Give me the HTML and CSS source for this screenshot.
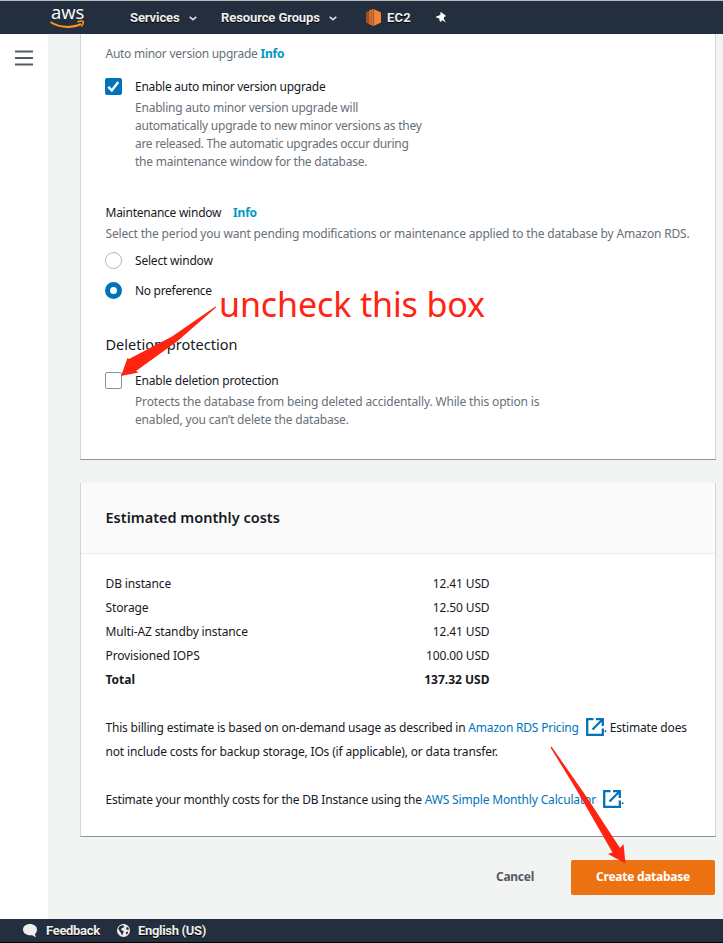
FILE: index.html
```html
<!DOCTYPE html>
<html lang="en">
<head>
<meta charset="utf-8">
<title>Create database</title>
<link rel="stylesheet" href="styles.css">
</head>
<body>
<header class="topbar">
  <div class="logo"><span class="logo-text">aws</span>
    <svg class="smile" width="36" height="10" viewBox="0 0 36 10"><path d="M.5 2C9 8 23 8.200 31 4" fill="none" stroke="#f7981f" stroke-width="2"/><path d="M27.500 2C30 .8 33 .8 33.300 1.500S32.600 5 31.300 6.500" fill="none" stroke="#f7981f" stroke-width="1.600"/></svg>
  </div>
  <nav class="nav">
    <a class="nav-services">Services</a>
    <svg class="chev" width="8" height="5" viewBox="0 0 8 5"><path d="M.7 .8L4 3.600 7.300 .8" fill="none" stroke="#ddd" stroke-width="1.600"/></svg>
    <a class="nav-groups">Resource Groups</a>
    <svg class="chev" width="8" height="5" viewBox="0 0 8 5"><path d="M.7 .8L4 3.600 7.300 .8" fill="none" stroke="#ddd" stroke-width="1.600"/></svg>
    <svg class="cube" width="15" height="17" viewBox="0 0 15 17"><path d="M0 3L3 2V15L0 13.500Z" fill="#9d5025"/><path d="M3 1.500L7.500 0V17L3 15.200Z" fill="#d97730"/><path d="M7.500 0L15 3.500V13.500L7.500 17Z" fill="#f58534"/><path d="M2.800 2v13M5.200 2v13.500M7.600 1v15" stroke="#9d5025" stroke-width=".8"/></svg>
    <a class="nav-ec2">EC2</a>
    <svg class="pin" width="11" height="11" viewBox="0 0 11 11"><path d="M4.800 0L9.700 3.400 9.300 4.800 8 5 7.900 7 10 10.500 6 8 5.200 9.700 3.800 9.400 3.200 6.600 .2 5.600 0 4.400 2.200 4 4.600 2.400 4.200 1Z" fill="#fff"/></svg>
  </nav>
</header>
<main class="layout">
  <aside class="rail">
    <svg width="18" height="16" viewBox="0 0 18 16"><path d="M0 1.500h18M0 8h18M0 14.500h18" stroke="#545b64" stroke-width="2.200"/></svg>
  </aside>
  <section class="content">
    <div class="card maintenance">
      <p class="muted first">Auto minor version upgrade <a class="info">Info</a></p>
      <div class="option">
        <svg width="17" height="17" viewBox="0 0 17 17"><rect width="17" height="17" rx="2" fill="#0073bb"/><path d="M3.300 8.800L6.800 12.400 13.300 4" fill="none" stroke="#fff" stroke-width="2.400"/></svg>
        <div><p class="label upgrade">Enable auto minor version upgrade</p>
        <p class="muted help">Enabling auto minor version upgrade will<br>automatically upgrade to new minor versions as they<br><span class="tight">are released. The automatic upgrades occur during</span><br>the maintenance window for the database.</p></div>
      </div>
      <p class="window-title">Maintenance window <a class="info gap">Info</a></p>
      <p class="muted period">Select the period you want pending modifications or maintenance applied to the database by Amazon RDS.</p>
      <div class="option select"><span class="radio"></span><p class="label">Select window</p></div>
      <div class="option pref"><span class="radio on"></span><p class="label tight">No preference</p></div>
      <h2 class="subhead">Deletion protection</h2>
      <div class="option del"><span class="check"></span>
        <div><p class="label">Enable deletion protection</p>
        <p class="muted help loose">Protects the database from being deleted accidentally. While this option is<br>enabled, you can’t delete the database.</p></div>
      </div>
    </div>
    <div class="card costs">
      <h2 class="card-head">Estimated monthly costs</h2>
      <div class="card-body">
        <div class="row"><span>DB instance</span><span>12.41 USD</span></div>
        <div class="row"><span>Storage</span><span>12.50 USD</span></div>
        <div class="row"><span>Multi-AZ standby instance</span><span>12.41 USD</span></div>
        <div class="row"><span>Provisioned IOPS</span><span>100.00 USD</span></div>
        <div class="row total"><span>Total</span><span>137.32 USD</span></div>
        <p class="note">This billing estimate is based on on-demand usage as described in <a class="link">Amazon RDS Pricing</a><svg class="ext" width="18" height="18" viewBox="0 0 18 18"><path d="M7.500 1.200H1.200V16.800H16.800V10.500M10 1.200H16.800V8M16.200 1.800L6.500 11.500" fill="none" stroke="#0073bb" stroke-width="2.300"/></svg><span class="loose">. Estimate does</span><br><span class="loose">not include costs for backup storage, IOs (if applicable), or data transfer.</span></p>
        <p class="note">Estimate your monthly costs for the DB Instance using the <a class="link loose">AWS Simple Monthly Calculator</a><svg class="ext" width="18" height="18" viewBox="0 0 18 18"><path d="M7.500 1.200H1.200V16.800H16.800V10.500M10 1.200H16.800V8M16.200 1.800L6.500 11.500" fill="none" stroke="#0073bb" stroke-width="2.300"/></svg>.</p>
      </div>
    </div>
    <div class="actions"><button class="cancel">Cancel</button><button class="create">Create database</button></div>
  </section>
</main>
<footer class="footer">
  <svg width="14" height="13" viewBox="0 0 14 13"><path d="M7 0C11 0 14 2.300 14 5.600 14 8 12.800 9.400 12 10c0 1 .4 2 1 3-1.700-.2-2.800-1-3.700-1.800C4 12 0 9.500 0 5.600 0 2.300 3 0 7 0Z" fill="#eee"/></svg>
  <a class="feedback">Feedback</a>
  <svg class="globe" width="13" height="13" viewBox="0 0 13 13"><circle cx="6.500" cy="6.500" r="6.500" fill="#eee"/><path d="M1.200 4.500L3 2 5.500 1.200 7.500 2.200 6 4 4.500 4.200 4.200 6 6.800 7.200 6.200 9 5 11.500 4 9 2.500 7ZM9 3.500L11 3.200 12 5.500 10.800 6 9.500 5.500ZM9 8L11.200 7.500 10.500 9.800 9 10.500Z" fill="#232f3e"/></svg>
  <a class="lang">English (US)</a>
</footer>
<div class="annotation">uncheck this box</div>
<svg class="arrows" width="723" height="943" viewBox="0 0 723 943"><path d="M215.500 306.500L172 336.500 129 359 127.500 358 121 376 138.500 372.500 136 371 177 341.500 216 307.500Z" fill="#ff2412"/><path d="M551.500 746.500L550.500 747.500 576 789 612.500 852.500 608 854 625.500 863.500 623.500 844 620 848 586 796Z" fill="#ff2412"/></svg>
</body>
</html>
```
FILE: styles.css
```css
* { box-sizing: border-box; }
body { margin: 0; width: 723px; height: 943px; overflow: hidden; position: relative; background: #f2f3f3; font: 12px/18px "Noto Sans", sans-serif; color: #16191f; white-space: nowrap; display: flex; flex-direction: column; }
p, h2 { margin: 0; }
svg { flex: none; }
.topbar { height: 34px; flex: none; background: #232f3e; border-top: 1px solid #b8bdbe; display: flex; padding-left: 50px; }
.logo { width: 80px; display: flex; flex-direction: column; padding-top: 1px; }
.logo-text { font: 500 18.5px/20px "Open Sans", sans-serif; color: #fff; padding-left: 1px; height: 18px; }
.nav, .footer { font: 700 13px/18px Roboto, sans-serif; color: #eee; display: flex; align-items: center; text-shadow: 0 1px 0 #000; }
.nav { height: 33px; }
.nav-services { width: 59px; letter-spacing: -.1px; }
.nav-groups { width: 108px; margin-left: 24px; letter-spacing: -.1px; }
.chev { position: relative; top: 1px; }
.cube { margin: 0 6px 0 29px; }
.nav-ec2 { width: 49px; letter-spacing: .2px; }
.layout { display: flex; height: 885px; flex: none; }
.rail { width: 48px; background: #fff; padding: 16px 15px; }
.content { flex: 1; padding: 0 7px 0 32px; }
.card { background: #fff; border: 1px solid #d0d5d5; border-top: 0; border-bottom-color: #879596; width: 636px; letter-spacing: -.2px; }
.maintenance { height: 426px; padding: 11px 24px 0 24.5px; }
.muted { color: #687078; }
.first { letter-spacing: -.27px; }
.info { color: #0098c4; font-weight: 700; letter-spacing: -.2px; }
.gap { margin-left: 9px; }
.option { display: flex; gap: 12.5px; }
.first + .option { margin-top: 15px; }
.option > svg, .radio, .check { margin-left: -.5px; margin-right: .5px; }
.upgrade { letter-spacing: -.27px; }
.help { margin-top: 3px; letter-spacing: -.23px; }
.tight { letter-spacing: -.3px; }
.loose { letter-spacing: -.16px; }
.window-title { margin-top: 33px; letter-spacing: -.25px; }
.period { margin-top: 3px; letter-spacing: -.18px; }
.select { margin-top: 9px; }
.pref { margin-top: 12px; }
.radio { width: 17px; height: 17px; border: 1.5px solid #aab7b8; border-radius: 50%; flex: none; }
.on { border: 5px solid #0073bb; }
.subhead { font-size: 14.5px; line-height: 24px; font-weight: 400; letter-spacing: .02px; margin-top: 32px; }
.del { margin-top: 16px; }
.check { width: 17px; height: 17px; border: 1px solid #879596; border-radius: 2px; flex: none; }
.costs { margin-top: 23px; height: 354px; }
.card-head { height: 71px; background: #fafafa; border-bottom: 1px solid #eaeded; font-size: 14.5px; line-height: 68px; padding-left: 24.5px; font-weight: 600; letter-spacing: 0; }
.card-body { padding: 18px 24px 0 24.5px; line-height: 24px; }
.row { width: 384px; display: flex; justify-content: space-between; letter-spacing: -.13px; }
.total { font-weight: 700; letter-spacing: 0; }
.note { margin-top: 24px; }
.link { color: #0073bb; }
.ext { vertical-align: -4px; margin-left: 7px; }
.actions { display: flex; justify-content: flex-end; margin: 23px 1px 0 0; }
button { border: 0; font: 700 12px/18px "Noto Sans", sans-serif; height: 35px; padding: 0 0 1px; letter-spacing: -.27px; }
.cancel { background: none; color: #545b64; width: 112px; }
.create { background: #ec7211; color: #fff; border-radius: 2px; width: 144px; }
.footer { height: 24px; flex: none; background: #232f3e; border-bottom: 1px solid #000; padding-left: 23px; letter-spacing: -.32px; }
.feedback { width: 71px; margin-left: 9px; }
.lang { margin-left: 8px; }
.annotation { position: absolute; left: 219px; top: 281px; font: 34px/46px "Noto Sans", sans-serif; letter-spacing: -.12px; color: #ff2412; }
.arrows { position: absolute; left: 0; top: 0; }
```
